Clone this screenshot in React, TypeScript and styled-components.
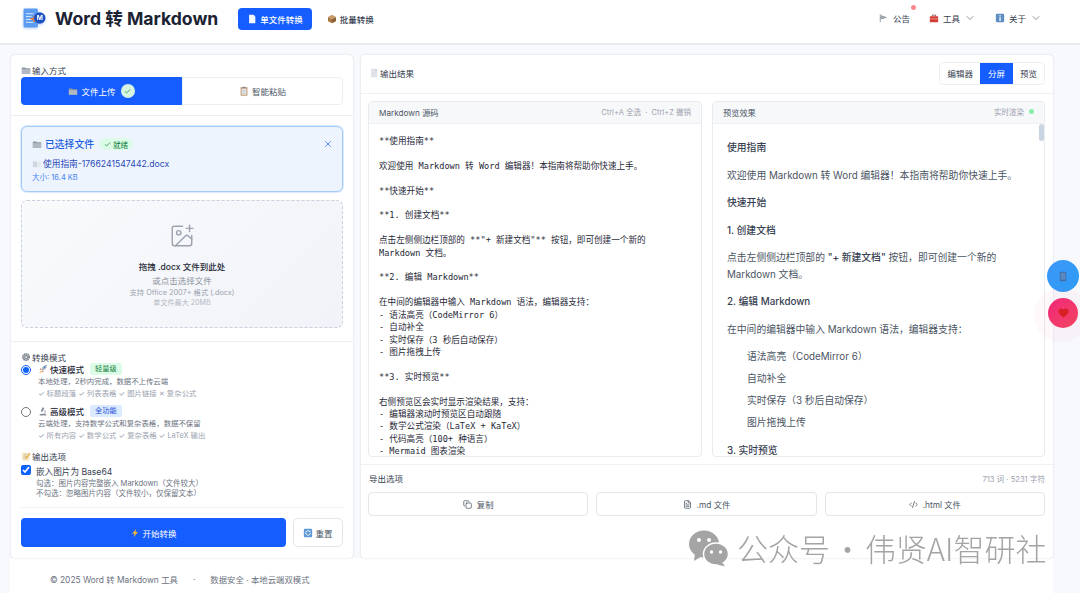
import React from "react";
import styled, { createGlobalStyle } from "styled-components";
import { ChevronDown, Check, X, ImagePlus, Copy, FileText, CodeXml } from "lucide-react";

const GlobalStyle = createGlobalStyle`
  html, body {
    margin: 0;
    height: 593px;
    overflow: hidden;
    background: #f7f9fc;
    font-family: Inter, "Noto Sans CJK SC", sans-serif;
    color: #1f2937;
  }
  * { box-sizing: border-box; }
`;

/* small pictures standing in for the emoji of the original */
const FolderIcon = () => (
  <Glyph viewBox="0 0 12 12">
    <path d="M1 3h4l1 1h5v6.5H1z" fill="#8d98a5" />
    <path d="M1 5h10v5.5H1z" fill="#b0b8c2" />
  </Glyph>
);
const DocIcon = ({ light }: { light?: boolean }) => (
  <Glyph viewBox="0 0 12 12">
    <path d="M2.5 1H8l2 2.2V11H2.5z" fill={light ? "#f4f7fb" : "#dfe3e8"} />
    <path d="M8 1v2.2h2z" fill={light ? "#c5d6f5" : "#a9b0b9"} />
  </Glyph>
);
const ClipboardIcon = () => (
  <Glyph viewBox="0 0 12 12">
    <rect x="2" y="1.5" width="8" height="10" fill="#b3814f" />
    <rect x="3" y="3" width="6" height="7.5" fill="#eef0f2" />
    <path d="M4 5h4M4 7h4M4 9h3" stroke="#9aa3ad" strokeWidth=".6" />
    <rect x="4.5" y="1" width="3" height="1.5" fill="#7d8792" />
  </Glyph>
);
const BookIcon = () => (
  <Glyph viewBox="0 0 12 12">
    <path d="M1 3c2-.6 3.600-.4 5 .5v7C4.600 9.600 3 9.400 1 10z" fill="#cfd6df" />
    <path d="M11 3c-2-.6-3.600-.4-5 .5v7c1.400-.9 3-1.100 5-.5z" fill="#e6eaee" />
  </Glyph>
);
const GearIcon = () => (
  <Glyph viewBox="0 0 12 12">
    <circle cx="6" cy="6" r="3.600" fill="none" stroke="#7c838c" strokeWidth="2.400" strokeDasharray="1.700 .6" />
    <circle cx="6" cy="6" r="2.600" fill="#8d949c" />
    <circle cx="6" cy="6" r="1.200" fill="#d6d9dd" />
  </Glyph>
);
const RocketIcon = () => (
  <Glyph viewBox="0 0 12 12">
    <path d="M11 1C7.500 1.300 5 3.500 4 6.500L5.500 8C8.500 7 10.700 4.500 11 1z" fill="#a9b4c2" />
    <circle cx="8" cy="4" r="1" fill="#3f7fd6" />
    <path d="M4 6.500L1.800 6.800 3.300 5zM5.500 8l-.3 2.200L7 8.700z" fill="#d8402f" />
    <path d="M3.800 8.200L1.200 10.800l3.400-1.100z" fill="#f59e0b" />
  </Glyph>
);
const MicroscopeIcon = () => (
  <Glyph viewBox="0 0 12 12">
    <path d="M5.500 1.500l2 1-2.300 4.700-1.900-1z" fill="#7f8a96" />
    <path d="M7.500 4.500A3.400 3.400 0 0 1 7 10H3" fill="none" stroke="#8d98a5" strokeWidth="1" />
    <rect x="2" y="10" width="8" height="1.200" fill="#5f6974" />
  </Glyph>
);
const MemoIcon = () => (
  <Glyph viewBox="0 0 12 12">
    <rect x="1.500" y="2" width="8.500" height="9.500" fill="#f1e6bf" />
    <path d="M3 4.500h5M3 6.500h4M3 8.500h3" stroke="#b8ad8a" strokeWidth=".6" />
    <path d="M5.500 8.500L10.500 2.500l1 .9-5 5.800-1.400.3z" fill="#e9a23b" />
  </Glyph>
);
const BoltIcon = () => (
  <Glyph viewBox="0 0 12 12">
    <path d="M7.500 1L2.500 7h3l-1 4 5-6.200h-3z" fill="#f7b733" />
  </Glyph>
);
const RefreshIcon = () => (
  <Glyph viewBox="0 0 12 12">
    <rect x="1" y="1" width="10" height="10" rx="1.500" fill="#5f9ad6" />
    <path d="M8.700 6A2.700 2.700 0 1 1 7.800 4" fill="none" stroke="#fff" strokeWidth="1" />
    <path d="M8.800 2.600v2.200H6.600z" fill="#fff" />
  </Glyph>
);
const BoxIcon = () => (
  <Glyph viewBox="0 0 12 12">
    <path d="M6 1l4.800 2.500L6 6 1.200 3.500z" fill="#c79a66" />
    <path d="M1.200 3.500L6 6v5.200L1.200 8.700z" fill="#a87842" />
    <path d="M10.800 3.500L6 6v5.200l4.800-2.500z" fill="#8c6236" />
  </Glyph>
);
const FlagIcon = () => (
  <Glyph viewBox="0 0 12 12">
    <path d="M1.500 1.500v9.500" stroke="#7f8790" strokeWidth="1" />
    <path d="M2 2.500l4 1.500 4 1.200L6 7 2 7.500z" fill="#9aa2ab" />
  </Glyph>
);
const ToolboxIcon = () => (
  <Glyph viewBox="0 0 12 12">
    <path d="M4 4V2.500h4V4" fill="none" stroke="#7b4a45" strokeWidth="1" />
    <rect x="1" y="4" width="10" height="7" rx=".8" fill="#d43d33" />
    <path d="M1 7h10" stroke="#f0b9b4" strokeWidth=".8" />
  </Glyph>
);
const InfoIcon = () => (
  <Glyph viewBox="0 0 12 12">
    <rect x="1" y="1" width="10" height="10" rx="1.500" fill="#5d8fc4" />
    <rect x="5.300" y="5" width="1.500" height="4.500" fill="#fff" />
    <rect x="5.300" y="2.600" width="1.500" height="1.500" fill="#fff" />
  </Glyph>
);

const Logo = () => (
  <LogoSvg viewBox="0 0 24 22">
    <rect x="0.500" y="0.500" width="15" height="20" rx="1.500" fill="#5b9bf0" />
    <path d="M3 6h8M3 9h6M3 12h6M3 15h8" stroke="#dbeafe" strokeWidth="1" />
    <path d="M8 10.500h3V8l1.500 0v2.500h3V12h-3v2.500H11V12H8z" fill="#f97316" />
    <circle cx="17.500" cy="10.500" r="6" fill="#1d4fc4" />
    <text x="17.500" y="13" textAnchor="middle" fontSize="7" fontWeight="700" fill="#fff" fontFamily="Inter">M</text>
  </LogoSvg>
);

const sourceLines = [
  "**使用指南**", "",
  "欢迎使用 Markdown 转 Word 编辑器！本指南将帮助你快速上手。", "",
  "**快速开始**", "",
  "**1. 创建文档**", "",
  "点击左侧侧边栏顶部的 **\"+ 新建文档\"** 按钮，即可创建一个新的",
  "Markdown 文档。", "",
  "**2. 编辑 Markdown**", "",
  "在中间的编辑器中输入 Markdown 语法，编辑器支持：",
  "- 语法高亮（CodeMirror 6）",
  "- 自动补全",
  "- 实时保存（3 秒后自动保存）",
  "- 图片拖拽上传", "",
  "**3. 实时预览**", "",
  "右侧预览区会实时显示渲染结果，支持：",
  "- 编辑器滚动时预览区自动跟随",
  "- 数学公式渲染（LaTeX + KaTeX）",
  "- 代码高亮（100+ 种语言）",
  "- Mermaid 图表渲染",
];

const modes = [
  {
    icon: <RocketIcon />,
    name: "快速模式",
    tag: "轻量级",
    green: true,
    desc: "本地处理，2秒内完成，数据不上传云端",
    feats: "✓ 标题段落 ✓ 列表表格 ✓ 图片链接 ✕ 复杂公式",
    checked: true,
  },
  {
    icon: <MicroscopeIcon />,
    name: "高级模式",
    tag: "全功能",
    green: false,
    desc: "云端处理，支持数学公式和复杂表格，数据不保留",
    feats: "✓ 所有内容 ✓ 数学公式 ✓ 复杂表格 ✓ LaTeX 输出",
    checked: false,
  },
];

export default function App() {
  return (
    <>
      <GlobalStyle />
      <Header>
        <Brand>
          <Logo />
          <Title>Word 转 Markdown</Title>
        </Brand>
        <HeaderNav>
          <NavButton $active>
            <DocIcon light />
            单文件转换
          </NavButton>
          <NavButton>
            <BoxIcon />
            批量转换
          </NavButton>
        </HeaderNav>
        <HeaderMenu>
          <MenuItem>
            <FlagIcon />
            公告
            <Dot />
          </MenuItem>
          <MenuItem>
            <ToolboxIcon />
            工具
            <ChevronDown size={12} color="#6b7280" strokeWidth={1.500} />
          </MenuItem>
          <MenuItem>
            <InfoIcon />
            关于
            <ChevronDown size={12} color="#6b7280" strokeWidth={1.500} />
          </MenuItem>
        </HeaderMenu>
      </Header>

      <Page>
        <Main>
          <LeftCard>
            <InputSection>
              <SectionLabel>
                <FolderIcon />
                输入方式
              </SectionLabel>
              <Tabs>
                <Tab $active>
                  <FolderIcon />
                  文件上传
                  <TabCheck>
                    <Check size={7} color="#15803d" strokeWidth={2.500} />
                  </TabCheck>
                </Tab>
                <Tab>
                  <ClipboardIcon />
                  智能粘贴
                </Tab>
              </Tabs>
            </InputSection>

            <FileSection>
              <FileBox>
                <FileHead>
                  <FolderIcon />
                  <FileTitle>已选择文件</FileTitle>
                  <ReadyTag>
                    <Check size={7} strokeWidth={2.500} />
                    就绪
                  </ReadyTag>
                  <CloseWrap>
                    <X size={10} color="#3b82f6" />
                  </CloseWrap>
                </FileHead>
                <FileName>
                  <BookIcon />
                  使用指南-1766241547442.docx
                </FileName>
                <FileSize>大小: 16.4 KB</FileSize>
              </FileBox>
              <DropZone>
                <ImagePlus size={26} color="#9ca3af" strokeWidth={1.300} />
                <DropTitle>拖拽 .docx 文件到此处</DropTitle>
                <DropHint>或点击选择文件</DropHint>
                <DropNote>支持 Office 2007+ 格式 (.docx)</DropNote>
                <DropLimit>单文件最大 20MB</DropLimit>
              </DropZone>
            </FileSection>

            <OptionSection>
              <SectionLabel>
                <GearIcon />
                转换模式
              </SectionLabel>
              <ModeList>
                {modes.map((m) => (
                  <ModeRow key={m.name}>
                    <Radio type="radio" name="mode" defaultChecked={m.checked} />
                    <ModeBody>
                      <ModeHead>
                        {m.icon}
                        <ModeName>{m.name}</ModeName>
                        <ModeTag $green={m.green}>{m.tag}</ModeTag>
                      </ModeHead>
                      <ModeDesc>{m.desc}</ModeDesc>
                      <ModeFeats>{m.feats}</ModeFeats>
                    </ModeBody>
                  </ModeRow>
                ))}
              </ModeList>
              <OutputLabel>
                <MemoIcon />
                输出选项
              </OutputLabel>
              <CheckRow>
                <CheckBox type="checkbox" defaultChecked />
                <div>
                  <CheckTitle>嵌入图片为 Base64</CheckTitle>
                  <CheckNote>勾选：图片内容完整嵌入 Markdown（文件较大）</CheckNote>
                  <CheckNote>不勾选：忽略图片内容（文件较小，仅保留文本）</CheckNote>
                </div>
              </CheckRow>
              <Actions>
                <StartButton>
                  <BoltIcon />
                  开始转换
                </StartButton>
                <ResetButton>
                  <RefreshIcon />
                  重置
                </ResetButton>
              </Actions>
            </OptionSection>
          </LeftCard>

          <RightCard>
            <OutputHead>
              <SectionLabel>
                <DocIcon />
                输出结果
              </SectionLabel>
              <Segments>
                <Segment>编辑器</Segment>
                <Segment $active>分屏</Segment>
                <Segment>预览</Segment>
              </Segments>
            </OutputHead>

            <Panels>
              <Panel>
                <PanelHead>
                  <PanelTitle>Markdown 源码</PanelTitle>
                  <PanelHint>Ctrl+A 全选 &nbsp;·&nbsp; Ctrl+Z 撤销</PanelHint>
                </PanelHead>
                <SourceBody>
                  {sourceLines.map((line, i) => (
                    <SourceLine key={i}>{line || " "}</SourceLine>
                  ))}
                </SourceBody>
              </Panel>
              <Panel>
                <PanelHead>
                  <PanelTitle>预览效果</PanelTitle>
                  <PanelHint>
                    实时渲染
                    <LiveDot />
                  </PanelHint>
                </PanelHead>
                <PreviewBody>
                  <Scrollbar />
                  <PreviewHeading>使用指南</PreviewHeading>
                  <PreviewText>欢迎使用 Markdown 转 Word 编辑器！本指南将帮助你快速上手。</PreviewText>
                  <PreviewHeading>快速开始</PreviewHeading>
                  <PreviewHeading>1. 创建文档</PreviewHeading>
                  <PreviewText>
                    点击左侧侧边栏顶部的 <strong>"+ 新建文档"</strong> 按钮，即可创建一个新的 Markdown 文档。
                  </PreviewText>
                  <PreviewHeading>2. 编辑 Markdown</PreviewHeading>
                  <PreviewText>在中间的编辑器中输入 Markdown 语法，编辑器支持：</PreviewText>
                  <PreviewList>
                    <li>语法高亮（CodeMirror 6）</li>
                    <li>自动补全</li>
                    <li>实时保存（3 秒后自动保存）</li>
                    <li>图片拖拽上传</li>
                  </PreviewList>
                  <PreviewHeading>3. 实时预览</PreviewHeading>
                </PreviewBody>
              </Panel>
            </Panels>

            <ExportSection>
              <ExportHead>
                <ExportTitle>导出选项</ExportTitle>
                <ExportStats>713 词 · 5231 字符</ExportStats>
              </ExportHead>
              <ExportButtons>
                <ExportButton>
                  <Copy size={9} />
                  复制
                </ExportButton>
                <ExportButton>
                  <FileText size={9} />
                  .md 文件
                </ExportButton>
                <ExportButton>
                  <CodeXml size={9} />
                  .html 文件
                </ExportButton>
              </ExportButtons>
            </ExportSection>
          </RightCard>
        </Main>

        <Footer>
          <span>© 2025 Word 转 Markdown 工具</span>
          <span>·</span>
          <span>数据安全 · 本地云端双模式</span>
        </Footer>
      </Page>

      <FloatBlue>
        <svg width="8" height="11" viewBox="0 0 11 14">
          <rect x="1" y="0.500" width="9" height="13" rx="1.500" fill="#3f6fa8" />
          <rect x="2.200" y="2" width="6.600" height="9.500" fill="#5a88c0" />
        </svg>
      </FloatBlue>
      <FloatHalo />
      <FloatPink>
        <svg width="11" height="10" viewBox="0 0 13 12">
          <path d="M6.500 11.500C2 8 .5 6 .5 3.700.5 1.800 2 .5 3.600.5c1.200 0 2.300.6 2.900 1.700C7.100 1.100 8.200.5 9.400.5c1.600 0 3.100 1.300 3.100 3.200C12.500 6 11 8 6.500 11.500z" fill="#d91f26" />
        </svg>
      </FloatPink>

      <Watermark>
        <svg width="42" height="38" viewBox="0 0 42 38">
          <ellipse cx="16" cy="15" rx="15" ry="13.500" fill="#a4a4a4" />
          <path d="M7 24l-1 8 8-5z" fill="#a4a4a4" />
          <ellipse cx="28" cy="25" rx="12.500" ry="11" fill="#a4a4a4" stroke="#fff" strokeWidth="1.500" />
          <path d="M34 33l3 4.500-8-2z" fill="#a4a4a4" />
          <circle cx="11" cy="11" r="2" fill="#fff" />
          <circle cx="21" cy="11" r="2" fill="#fff" />
          <circle cx="23.500" cy="23" r="1.700" fill="#fff" />
          <circle cx="32.500" cy="23" r="1.700" fill="#fff" />
        </svg>
        <WatermarkText>公众号{"\u200A"}·{"\u200A"}伟贤AI智研社</WatermarkText>
      </Watermark>
    </>
  );
}

const Glyph = styled.svg`
  width: 10px;
  height: 10px;
  flex: none;
`;

const LogoSvg = styled.svg`
  width: 23px;
  height: 21px;
  flex: none;
  filter: drop-shadow(0 1px 1.500px rgba(59, 130, 246, 0.35));
`;

const Header = styled.header`
  display: flex;
  align-items: center;
  height: 45px;
  padding: 0 38px 6px 23px;
  background: #fff;
  border-bottom: 2px solid #e7eaef;
`;

const Brand = styled.div`
  display: flex;
  align-items: center;
  gap: 9px;
`;

const Title = styled.h1`
  margin: 0 0 2px;
  font-size: 17.600px;
  font-weight: 700;
  color: #1a2233;
  white-space: nowrap;
`;

const HeaderNav = styled.nav`
  display: flex;
  align-items: center;
  gap: 15px;
  margin-left: 20px;
`;

const NavButton = styled.div<{ $active?: boolean }>`
  display: flex;
  align-items: center;
  gap: 3px;
  height: 22px;
  padding: ${({ $active }) => ($active ? "0 9px" : "0")};
  border-radius: 4px;
  font-size: 8.500px;
  font-weight: 500;
  color: ${({ $active }) => ($active ? "#fff" : "#374151")};
  background: ${({ $active }) => ($active ? "#165dff" : "transparent")};
`;

const HeaderMenu = styled.div`
  display: flex;
  align-items: center;
  gap: 19px;
  margin-left: auto;
  margin-bottom: 2px;
`;

const MenuItem = styled.div`
  position: relative;
  display: flex;
  align-items: center;
  gap: 4px;
  font-size: 8.500px;
  color: #374151;
`;

const Dot = styled.span`
  position: absolute;
  top: -7px;
  right: -6px;
  width: 5px;
  height: 5px;
  border-radius: 50%;
  background: #fb8a8f;
`;

const Page = styled.div`
  display: flex;
  flex-direction: column;
  width: 1043px;
  margin-left: 10px;
  background: #fff;
`;

const Main = styled.main`
  display: flex;
  gap: 8px;
  height: 513px;
  padding: 10px 0 0 1px;
  background: #f7f9fc;
`;

const Card = styled.section`
  display: flex;
  flex-direction: column;
  height: 503px;
  background: #fff;
  border-radius: 4px;
  box-shadow: 0 0 2px rgba(30, 41, 59, 0.2);
`;

const LeftCard = styled(Card)`
  width: 342px;
  flex: none;
`;

const RightCard = styled(Card)`
  flex: 1;
  min-width: 0;
`;

const InputSection = styled.div`
  padding: 9px 10px 10px;
  border-bottom: 1px solid #eceef2;
`;

const SectionLabel = styled.div`
  display: flex;
  align-items: center;
  gap: 1px;
  height: 12px;
  font-size: 8.500px;
  color: #374151;
`;

const Tabs = styled.div`
  display: flex;
  height: 28px;
  margin-top: 1px;
  border-radius: 4px;
  overflow: hidden;
`;

const Tab = styled.div<{ $active?: boolean }>`
  flex: 1;
  display: flex;
  align-items: center;
  justify-content: center;
  gap: 3px;
  font-size: 8.500px;
  color: ${({ $active }) => ($active ? "#fff" : "#4b5563")};
  background: ${({ $active }) => ($active ? "#165dff" : "#fff")};
  box-shadow: ${({ $active }) => ($active ? "none" : "inset 0 0 0 1px #eceef2")};
  border-radius: ${({ $active }) => ($active ? "0" : "0 4px 4px 0")};
`;

const TabCheck = styled.span`
  display: flex;
  align-items: center;
  justify-content: center;
  width: 14px;
  height: 14px;
  margin-left: 2px;
  border-radius: 50%;
  background: #d6f5e0;
`;

const FileSection = styled.div`
  display: flex;
  flex-direction: column;
  gap: 8px;
  padding: 10px 10px 13px;
  border-bottom: 1px solid #eceef2;
`;

const FileBox = styled.div`
  height: 66px;
  padding: 11px 10px 0;
  background: #eef4fe;
  border: 1px solid #a5cbf9;
  border-radius: 6px;
  box-shadow: 0 0 0 1px rgba(147, 197, 253, 0.35);
`;

const FileHead = styled.div`
  display: flex;
  align-items: center;
  gap: 3px;
  height: 12px;
`;

const FileTitle = styled.span`
  font-size: 9.800px;
  font-weight: 500;
  color: #1d5fe0;
`;

const ReadyTag = styled.span`
  display: flex;
  align-items: center;
  gap: 2px;
  height: 12px;
  margin-left: 2px;
  padding: 0 5px;
  border-radius: 6px;
  font-size: 7.500px;
  color: #15803d;
  background: #dcfce7;
`;

const CloseWrap = styled.span`
  display: flex;
  margin-left: auto;
  margin-right: -1px;
`;

const FileName = styled.div`
  display: flex;
  align-items: center;
  gap: 1px;
  margin-top: 7px;
  font-size: 8.700px;
  color: #2b4bb5;
`;

const FileSize = styled.div`
  margin-top: 1px;
  font-size: 7.500px;
  color: #4a86f0;
`;

const DropZone = styled.div`
  display: flex;
  flex-direction: column;
  align-items: center;
  height: 128px;
  padding-top: 22px;
  background: linear-gradient(135deg, #f9fafc, #f1f3f8);
  border: 1px dashed #c9d1de;
  border-radius: 6px;
`;

const DropTitle = styled.div`
  margin-top: 11px;
  font-size: 8.500px;
  font-weight: 500;
  color: #1f2937;
`;

const DropHint = styled.div`
  margin-top: 2px;
  font-size: 8.500px;
  color: #8b93a0;
`;

const DropNote = styled.div`
  margin-top: 1px;
  font-size: 7.300px;
  color: #9ca3af;
`;

const DropLimit = styled.div`
  font-size: 7.100px;
  color: #b4bac4;
`;

const OptionSection = styled.div`
  flex: 1;
  padding: 9px 10px 0;
`;

const ModeList = styled.div`
  display: flex;
  flex-direction: column;
  gap: 6px;
`;

const ModeRow = styled.div`
  display: flex;
  gap: 5px;
`;

const Radio = styled.input`
  width: 10px;
  height: 10px;
  margin: 2px 2px 0 0;
  flex: none;
  accent-color: #0f62fe;
`;

const ModeBody = styled.div`
  min-width: 0;
`;

const ModeHead = styled.div`
  display: flex;
  align-items: center;
  gap: 2px;
  height: 12px;
`;

const ModeName = styled.span`
  font-size: 8.500px;
  font-weight: 500;
  color: #1f2937;
`;

const ModeTag = styled.span<{ $green: boolean }>`
  margin-left: 4px;
  padding: 0 5px;
  line-height: 12px;
  border-radius: 2px;
  font-size: 7.200px;
  color: ${({ $green }) => ($green ? "#15803d" : "#1d4ed8")};
  background: ${({ $green }) => ($green ? "#dcfce7" : "#dbeafe")};
`;

const ModeDesc = styled.div`
  margin-top: 0.500px;
  font-size: 7.400px;
  line-height: 11px;
  color: #6b7280;
`;

const ModeFeats = styled.div`
  margin-top: 1.500px;
  font-size: 7.400px;
  line-height: 11px;
  color: #9ca3af;
`;

const OutputLabel = styled(SectionLabel)`
  margin-top: 9px;
`;

const CheckRow = styled.div`
  display: flex;
  gap: 5px;
  margin-top: 3px;
`;

const CheckBox = styled.input`
  width: 10px;
  height: 10px;
  margin: 0;
  flex: none;
  accent-color: #0f62fe;
`;

const CheckTitle = styled.div`
  margin: 1px 0;
  font-size: 8.600px;
  line-height: 12px;
  color: #374151;
`;

const CheckNote = styled.div`
  font-size: 7.500px;
  line-height: 10px;
  color: #6b7280;
`;

const Actions = styled.div`
  display: flex;
  gap: 7px;
  margin-top: 8px;
  padding-top: 10px;
  border-top: 1px solid #eef0f3;
`;

const StartButton = styled.div`
  flex: 1;
  display: flex;
  align-items: center;
  justify-content: center;
  gap: 2px;
  height: 29px;
  border-radius: 4px;
  font-size: 8.500px;
  color: #fff;
  background: #165dff;
`;

const ResetButton = styled.div`
  display: flex;
  align-items: center;
  justify-content: center;
  gap: 2px;
  width: 50px;
  height: 29px;
  border: 1px solid #e2e5ea;
  border-radius: 5px;
  font-size: 8.500px;
  color: #4b5563;
`;

const OutputHead = styled.div`
  display: flex;
  align-items: center;
  justify-content: space-between;
  height: 39px;
  padding: 0 8px 2px;
  border-bottom: 1px solid #eef0f3;
`;

const Segments = styled.div`
  display: flex;
  height: 23px;
  border: 1px solid #eceef2;
  border-radius: 4px;
  overflow: hidden;
`;

const Segment = styled.div<{ $active?: boolean }>`
  display: flex;
  align-items: center;
  padding: 0 ${({ $active }) => ($active ? "8px" : "7px")};
  font-size: 8.500px;
  color: ${({ $active }) => ($active ? "#fff" : "#374151")};
  background: ${({ $active }) => ($active ? "#165dff" : "#fff")};
`;

const Panels = styled.div`
  display: grid;
  grid-template-columns: 334px 333px;
  gap: 10px;
  height: 371px;
  padding: 7px 8px 7px 7px;
  border-bottom: 1px solid #eef0f3;
`;

const Panel = styled.div`
  display: flex;
  flex-direction: column;
  min-width: 0;
  min-height: 0;
  border: 1px solid #e8ebef;
  border-radius: 4px;
  overflow: hidden;
`;

const PanelHead = styled.div`
  display: flex;
  align-items: center;
  justify-content: space-between;
  height: 22px;
  flex: none;
  padding: 0 10px 2px;
  background: #f7f8fa;
  border-bottom: 1px solid #eef0f3;
`;

const PanelTitle = styled.span`
  font-size: 8.200px;
  color: #4b5563;
`;

const PanelHint = styled.span`
  display: flex;
  align-items: center;
  font-size: 7.500px;
  color: #9ca3af;
`;

const LiveDot = styled.span`
  width: 5px;
  height: 5px;
  margin-left: 5px;
  border-radius: 50%;
  background: #86efac;
`;

const SourceBody = styled.div`
  flex: 1;
  min-height: 0;
  padding: 11px 10px 0;
  overflow: hidden;
  font-family: "DejaVu Sans Mono", "Noto Sans CJK SC", monospace;
  font-size: 8.600px;
  line-height: 12.400px;
  color: #1f2937;
`;

const SourceLine = styled.div`
  white-space: pre;
`;

const PreviewBody = styled.div`
  position: relative;
  flex: 1;
  min-height: 0;
  padding: 16px 15px 0 14px;
  overflow: hidden;
  font-size: 9.800px;
  line-height: 16.500px;
  color: #4b5563;
`;

const Scrollbar = styled.div`
  position: absolute;
  top: 0;
  right: 0;
  width: 5px;
  height: 17px;
  border-radius: 3px;
  background: #cbd5e1;
`;

const PreviewHeading = styled.div`
  margin-bottom: 11px;
  font-size: 9.800px;
  font-weight: 500;
  color: #374151;
`;

const PreviewText = styled.p`
  margin: 0 0 11px;
  strong {
    font-weight: 500;
    color: #374151;
  }
`;

const PreviewList = styled.ul`
  margin: 0 0 11px;
  padding: 0 0 0 20px;
  list-style: none;
  li {
    margin-bottom: 5.500px;
  }
`;

const ExportSection = styled.div`
  padding: 7px 8px 0 7px;
`;

const ExportHead = styled.div`
  display: flex;
  align-items: center;
  justify-content: space-between;
  height: 12px;
  padding-left: 1px;
`;

const ExportTitle = styled.span`
  font-size: 8.500px;
  color: #374151;
`;

const ExportStats = styled.span`
  font-size: 7.600px;
  color: #9ca3af;
`;

const ExportButtons = styled.div`
  display: grid;
  grid-template-columns: repeat(3, 1fr);
  gap: 8px;
  margin-top: 8px;
`;

const ExportButton = styled.div`
  display: flex;
  align-items: center;
  justify-content: center;
  gap: 5px;
  height: 24px;
  border: 1px solid #e2e5ea;
  border-radius: 4px;
  font-size: 8.300px;
  color: #4b5563;
`;

const Footer = styled.footer`
  display: flex;
  align-items: center;
  gap: 15px;
  height: 35px;
  padding: 6px 0 0 40px;
  font-size: 8.400px;
  color: #6b7280;
`;

const FloatBlue = styled.div`
  position: fixed;
  top: 260px;
  left: 1047px;
  display: flex;
  align-items: center;
  justify-content: center;
  width: 32px;
  height: 32px;
  border-radius: 50%;
  background: linear-gradient(135deg, #3f97fa, #2a9cf3);
`;

const FloatHalo = styled.div`
  position: fixed;
  top: 288px;
  left: 1034px;
  width: 54px;
  height: 54px;
  border-radius: 50%;
  background: rgba(244, 63, 137, 0.035);
`;

const FloatPink = styled.div`
  position: fixed;
  top: 298px;
  left: 1048px;
  display: flex;
  align-items: center;
  justify-content: center;
  width: 30px;
  height: 30px;
  border-radius: 50%;
  background: linear-gradient(135deg, #f0287a, #f44560);
`;

const Watermark = styled.div`
  position: fixed;
  top: 529px;
  left: 688px;
  display: flex;
  align-items: center;
  gap: 7px;
`;

const WatermarkText = styled.span`
  font-size: 31px;
  line-height: 38px;
  white-space: nowrap;
  color: #a4a4a4;
  font-family: "Noto Sans CJK SC", sans-serif;
  font-weight: 300;
`;
